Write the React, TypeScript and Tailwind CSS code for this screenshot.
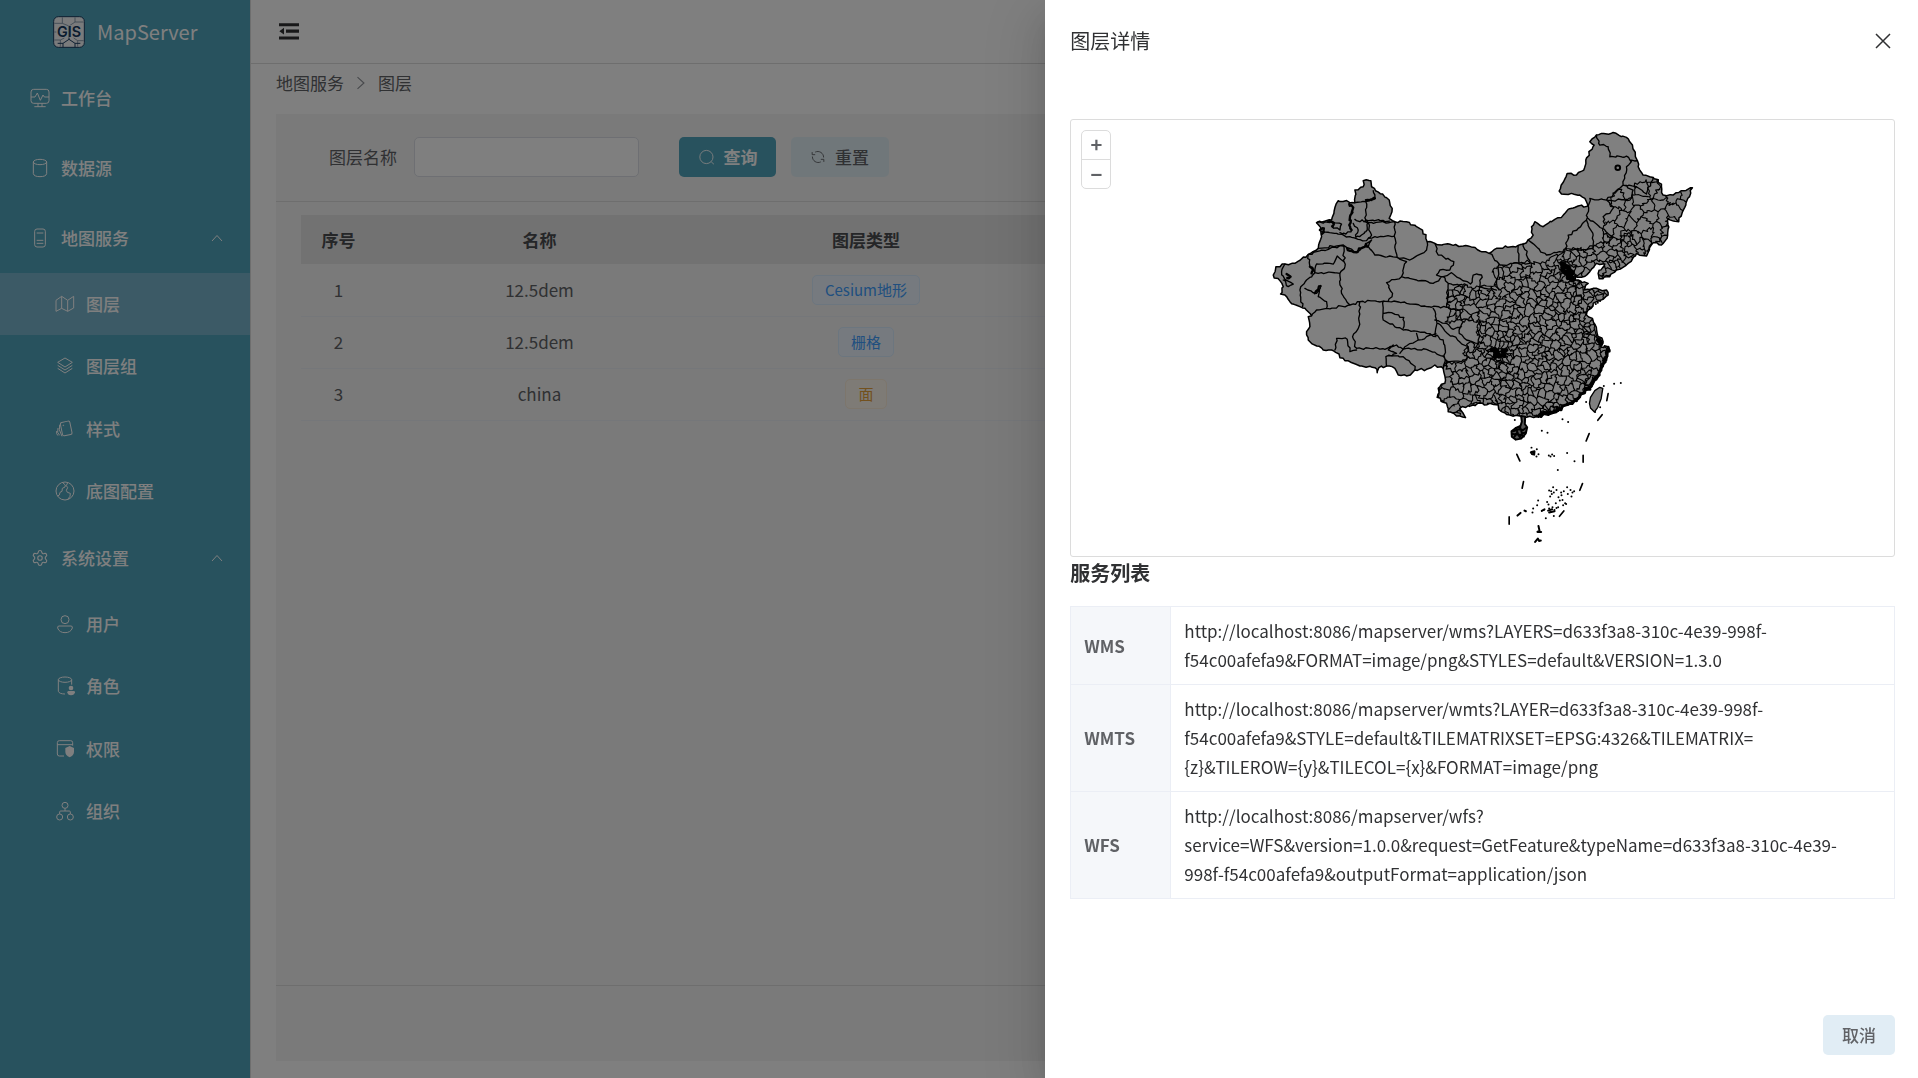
import React from "react";
import { Settings } from "lucide-react";

type Point = [number, number];

/* ---------- map geometry ---------- */

const parse = (text: string): Point[] =>
  text
    .trim()
    .split(/\s+/)
    .map((pair) => pair.split(",").map(Number) as Point);

function noise(x: number, y: number) {
  const s = Math.sin(x * 12.9898 + y * 78.233) * 43758.5453;
  return s - Math.floor(s) - 0.5;
}

/* Splits an edge into short jittered pieces; both directions give the same line. */
function roughEdge(a: Point, b: Point, amp: number, step: number): Point[] {
  const flip = a[0] > b[0] || (a[0] === b[0] && a[1] > b[1]);
  const [p, q] = flip ? [b, a] : [a, b];
  const len = Math.hypot(q[0] - p[0], q[1] - p[1]);
  const n = Math.max(1, Math.round(len / step));
  const out: Point[] = [];
  for (let i = 0; i <= n; i++) {
    const t = i / n;
    const edge = i === 0 || i === n ? 0 : amp;
    const x = p[0] + (q[0] - p[0]) * t;
    const y = p[1] + (q[1] - p[1]) * t;
    const rx = Math.round(x);
    const ry = Math.round(y);
    out.push([x + noise(rx, ry) * edge, y + noise(ry + 7, rx + 3) * edge]);
  }
  return flip ? out.reverse() : out;
}

function roughPath(points: Point[], closed: boolean, amp: number, step = 9) {
  const parts: string[] = [];
  const count = closed ? points.length : points.length - 1;
  for (let i = 0; i < count; i++) {
    const seg = roughEdge(points[i], points[(i + 1) % points.length], amp, step);
    seg.forEach((p, j) => {
      if (i > 0 && j === 0) return;
      parts.push(`${parts.length ? "L" : "M"}${p[0].toFixed(1)} ${p[1].toFixed(1)}`);
    });
  }
  return parts.join("") + (closed ? "Z" : "");
}

function inside([x, y]: Point, poly: Point[]) {
  let hit = false;
  for (let i = 0, j = poly.length - 1; i < poly.length; j = i++) {
    const [xi, yi] = poly[i];
    const [xj, yj] = poly[j];
    if (yi > y !== yj > y && x < ((xj - xi) * (y - yi)) / (yj - yi) + xi) hit = !hit;
  }
  return hit;
}

const OUTLINE = parse(`310,182 333,182 335,200 347,212 368,222 388,240 397,265 388,295 405,305 440,305 470,320
488,330 502,365 525,370 580,376 625,378 660,393 688,400 710,385 775,376 800,368 820,345 815,320 825,305 850,320
885,298 905,292 925,268 955,258 985,258 980,245 960,225 935,220 905,222 898,213 922,160 950,165 972,150 978,120
1003,75 990,65 1010,45 1060,37 1100,52 1118,75 1133,122 1140,150 1150,165 1180,172 1205,192 1210,225 1240,225
1265,212 1298,203 1275,262 1257,305 1225,295 1222,355 1205,375 1180,368 1160,408 1130,400 1105,430 1070,450
1050,470 1018,476 1015,460 1035,432 1010,430 990,455 965,472 945,465 945,480 985,490 972,510 1000,505 1040,510
1045,525 1010,545 985,570 980,585 998,595 1012,640 1030,665 1022,680 1045,680 1040,720 1020,755 995,800 960,830
930,850 880,880 830,890 790,893 750,885 725,875 715,855 690,850 640,855 600,865 617,893 590,888 565,875 560,850
532,832 540,800 555,790 550,745 525,735 500,748 465,750 440,768 415,765 405,745 380,738 357,743 352,758 345,743
300,738 250,715 215,690 190,690 145,660 140,635 150,620 145,590 155,587 135,565 120,560 90,545 75,525 62,522
70,500 40,465 48,440 75,432 105,430 145,403 175,385 185,350 182,322 170,308 215,300 222,280 235,242 285,248
285,210 310,200`);

const BORDERS = [
  "285,248 318,245 345,235 340,212",
  "318,245 318,300 388,303",
  "325,308 405,305 403,348 412,412",
  "325,355 345,350 403,348",
  "170,308 215,304 245,312 240,330 215,318",
  "185,335 230,340 270,350 320,362 335,345 325,308 318,300",
  "175,385 250,375 290,395 320,370 335,360 325,380 345,405 412,412",
  "145,403 170,395 250,378",
  "412,412 450,420 500,390 502,365",
  "412,412 440,425 425,470 380,488 398,520 385,545",
  "250,375 255,440 240,460 165,458 170,432 220,432 232,408 252,425",
  "240,460 245,520 270,555",
  "75,432 65,455 75,478 100,492 85,500 70,480",
  "145,403 150,440 165,458 140,480 120,510 128,560",
  "135,505 170,520 182,500 175,530 200,545 200,565 170,570 155,587",
  "200,565 270,555 300,545 370,543",
  "300,545 297,620 278,650 290,685 330,685 375,688 410,675 430,688 475,660 470,640",
  "370,543 440,550 500,560 560,562",
  "370,543 370,600 430,630 500,640 528,650",
  "372,580 395,578 432,592 430,625",
  "425,470 470,480 520,490 550,470 565,490 560,562",
  "525,370 535,405 582,425 570,450 540,450 530,465 550,470",
  "520,565 530,600 525,645",
  "225,690 230,655 262,658 270,695 290,690",
  "380,738 378,710 410,700 385,690 400,675",
  "420,700 440,685 500,688 555,715 550,745",
  "378,710 430,710 460,735 465,750",
  "525,645 550,660 560,740",
  "475,660 500,650 528,640",
  "525,600 560,610 580,628 605,620",
  "535,610 562,640 625,680 620,720 560,730",
  "660,600 655,670 620,660 598,640 610,605",
  "560,562 600,570 605,600 640,600",
  "565,490 610,500 600,525 560,535",
  "688,400 718,432 710,490 718,510",
  "550,470 575,458 600,475 632,492 640,465 665,465 660,500 710,510",
  "775,376 778,430 720,435",
  "790,370 810,430 778,430",
  "805,360 860,405 890,398 915,395 925,345 955,325 980,300 985,258",
  "980,300 1000,345 1000,385 930,390",
  "985,295 1010,312 1060,352 1040,370",
  "985,258 990,235 1040,240 1090,195 1100,140 1115,120 1133,122",
  "1010,45 1020,75 1045,80 1050,110 1100,108 1115,125",
  "1090,195 1120,210 1110,240 1040,240 1062,262 1050,280 1030,290 1035,312",
  "1090,195 1130,200 1160,222 1180,172",
];

const CHAINS = [
  "268,252 280,262 272,285 268,315 275,330",
  "262,385 290,397 318,372 322,380",
  "180,330 192,325 186,342",
  "150,440 160,450 155,460",
  "165,520 175,508 182,498",
  "80,462 92,470 82,474",
  "205,305 222,312 218,320",
  "318,240 345,235 335,240",
];

const THIN_CHAINS = ["285,298 300,305 318,300 322,330 305,345 288,352 295,330 280,310", "275,330 258,342 240,338"];

const DENSE = parse(`560,600 570,500 700,500 720,440 800,430 860,408 925,393 1000,387 1035,350 1035,310 1062,262
1045,240 1110,240 1120,205 1180,172 1320,190 1320,920 500,920 520,800 552,735 622,722 628,680 658,668 662,600 605,600`);

/* Metropolitan centres with many small districts: x, y, radius. */
const HUBS = [
  [715, 700, 42],
  [920, 445, 24],
  [938, 468, 20],
  [1020, 668, 16],
  [1038, 700, 18],
  [865, 868, 18],
  [945, 520, 20],
  [980, 635, 26],
  [1100, 355, 16],
  [845, 690, 22],
  [980, 800, 18],
  [1000, 780, 16],
  [770, 670, 24],
  [660, 690, 14],
  [790, 880, 14],
  [1058, 260, 8],
  [1055, 425, 14],
  [880, 550, 16],
  [545, 460, 10],
  [620, 545, 12],
];

function spacing(x: number, y: number) {
  for (const [hx, hy, r] of HUBS) if (Math.hypot(x - hx, y - hy) < r) return 9;
  if (y < 340 && x > 1000) return 36;
  if (x > 1000 && y < 470) return 21;
  if (x < 640) return 22;
  return 17;
}

function buildCells() {
  let seed = 20240;
  const rand = () => {
    seed = (seed * 1664525 + 1013904223) % 4294967296;
    return seed / 4294967296;
  };
  const sites: { p: Point; r: number }[] = [];
  for (let i = 0; i < 9000; i++) {
    const x = 480 + rand() * 860;
    const y = 140 + rand() * 790;
    const r = spacing(x, y) * (0.65 + rand() * 0.9);
    if (sites.every((s) => Math.hypot(s.p[0] - x, s.p[1] - y) > Math.min(r, (s.r + r) / 2))) {
      sites.push({ p: [x, y], r });
    }
  }
  return sites
    .filter((s) => inside(s.p, DENSE))
    .map(({ p }) => {
      const R = 80;
      let cell: Point[] = [
        [p[0] - R, p[1] - R],
        [p[0] + R, p[1] - R],
        [p[0] + R, p[1] + R],
        [p[0] - R, p[1] + R],
      ];
      for (const { p: o } of sites) {
        const dx = o[0] - p[0];
        const dy = o[1] - p[1];
        if ((dx === 0 && dy === 0) || Math.hypot(dx, dy) > 160) continue;
        const mx = p[0] + dx / 2;
        const my = p[1] + dy / 2;
        const side = (q: Point) => (q[0] - mx) * dx + (q[1] - my) * dy;
        const next: Point[] = [];
        for (let i = 0; i < cell.length; i++) {
          const a = cell[i];
          const b = cell[(i + 1) % cell.length];
          const sa = side(a);
          const sb = side(b);
          if (sa <= 0) next.push(a);
          if (sa < 0 !== sb < 0) {
            const t = sa / (sa - sb);
            next.push([a[0] + (b[0] - a[0]) * t, a[1] + (b[1] - a[1]) * t]);
          }
        }
        cell = next;
      }
      const bent = cell.map(([x, y]) => {
        const wx = Math.sin(y / 7) * 4 + Math.sin(x / 5 + y / 11) * 4;
        const wy = Math.cos(x / 6) * 4 + Math.cos(y / 5 - x / 13) * 4;
        return [Math.round(x + wx), Math.round(y + wy)] as Point;
      });
      return roughPath(bent, true, 11, 6);
    })
    .join("");
}

const OUTLINE_PATH = roughPath(OUTLINE, true, 7);
const BORDER_PATH = BORDERS.map((b) => roughPath(parse(b), false, 7)).join("");
const CHAIN_PATH = CHAINS.map((b) => roughPath(parse(b), false, 8, 6)).join("");
const THIN_CHAIN_PATH = THIN_CHAINS.map((b) => roughPath(parse(b), false, 8, 6)).join("");
const CELL_PATH = buildCells();

const ISLETS = parse(`285,450 428,448 445,456 366,482 383,488 414,600 464,574 442,549 499,396 526,426 541,412 552,348
583,341 603,339 387,557 397,554 403,558 392,560 335,533 333,548 351,538 356,553 350,560 400,652 394,664 402,668
391,680 410,660 416,682 424,668 428,690 436,700 444,672 452,660 458,668 463,664 455,680 442,652 420,692 408,700
398,712 386,704 382,696 392,726 404,720 410,714 402,738 378,745 355,692 352,706 340,716 338,728 372,720 388,716
415,712 430,706 439,702 396,672 388,662 425,676 432,664 541,93 534,98 528,102`);

function ChinaMap() {
  return (
    <svg viewBox="-567 0 2469 1308" className="block h-full w-full" role="img" aria-label="china">
      <defs>
        <clipPath id="land">
          <path d={OUTLINE_PATH} />
        </clipPath>
      </defs>
      <path d={OUTLINE_PATH} fill="#808080" />
      <g fill="none" stroke="#000" strokeLinejoin="round" strokeLinecap="round">
        <g clipPath="url(#land)">
          <path d={CELL_PATH} strokeWidth="3.4" />
        </g>
        <path d={BORDER_PATH} strokeWidth="4" />
        <path d={THIN_CHAIN_PATH} strokeWidth="4" />
        <path d={CHAIN_PATH} strokeWidth="7" />
        <path d={OUTLINE_PATH} strokeWidth="4.500" />
        <path d={roughPath(parse("1045,682 1038,720 1018,758 995,798 960,830 930,850 880,876 830,888"), false, 12, 6)} strokeWidth="9" />
        <path d={roughPath(parse("905,430 925,440 910,452 938,458 925,468 942,478"), false, 14, 5)} strokeWidth="14" />
        <path d={roughPath(parse("695,690 715,700 705,712 725,705 740,690"), false, 14, 5)} strokeWidth="12" />
        <path d={roughPath(parse("1015,660 1024,670"), false, 8, 5)} strokeWidth="14" />
        <circle cx="1074" cy="143" r="7" strokeWidth="6" />
      </g>
      <g transform="translate(480 450)" stroke="#000" strokeLinecap="round" strokeLinejoin="round">
        <path d="M512 382 525 362 540 352 549 355 544 386 534 412 524 426 512 414 509 400Z" fill="#808080" strokeWidth="4" />
        <path d="M304 438 316 440 315 462 322 472 318 490 304 506 288 509 276 500 275 484 288 474 302 468 306 455Z" fill="#555" strokeWidth="6" />
        <path
          d="M280 484 296 478 310 480 318 474M284 500 292 488 300 502 308 490 316 488M288 474 294 490M276 492 306 494 312 500M300 470 306 488"
          fill="none"
          strokeWidth="6"
        />
        <path
          d="M565 371 561 392M547 434 534 451M508 491 499 513M490 556V577M291 553 300 573M311 635 307 655M488 641 480 661M268 741V763M432 723 419 739"
          fill="none"
          strokeWidth="5"
        />
        <path
          d="M335 546 344 544 343 554 336 552ZM293 737 302 729M314 722 318 724M366 723 374 718M356 768 359 782 353 786 364 786M346 816 354 806 358 813 363 812M385 722 397 718M388 728 404 724"
          fill="none"
          strokeWidth="6"
        />
        {ISLETS.map(([x, y]) => (
          <circle key={`${x}-${y}`} cx={x} cy={y} r="3" stroke="none" />
        ))}
      </g>
    </svg>
  );
}

/* ---------- icons ---------- */

function Line({ children, size = "size-5", width = 3 }: { children: React.ReactNode; size?: string; width?: number }) {
  return (
    <svg
      viewBox="0 0 60 60"
      className={`${size} shrink-0`}
      fill="none"
      stroke="currentColor"
      strokeWidth={width}
      strokeLinejoin="round"
      aria-hidden="true"
    >
      {children}
    </svg>
  );
}

const icons = {
  monitor: (
    <Line>
      <rect x="3" y="4" width="54" height="42" rx="8" />
      <path d="M3 27H15L22 15 31 37 39 21 43 27H57M24 46V56M36 46V56M13 56H47" />
    </Line>
  ),
  database: (
    <Line>
      <ellipse cx="30" cy="12" rx="20" ry="8" />
      <path d="M10 12V47Q12 56 30 56T50 47V12" />
    </Line>
  ),
  server: (
    <Line>
      <rect x="14" y="3" width="32" height="54" rx="7" />
      <path d="M20 15H40M20 37H40M20 46H40" />
    </Line>
  ),
  map: (
    <Line>
      <path d="M3 19 20 7 38 19 56 7V42L38 52 20 43 3 52ZM20 7V43M38 19V52" />
    </Line>
  ),
  layers: (
    <Line>
      <path d="M30 6 52 19 30 33 8 19ZM8 28 30 42 52 28M8 37 30 51 52 37" />
    </Line>
  ),
  cards: (
    <Line>
      <rect x="19" y="8" width="29" height="41" rx="5" transform="rotate(-12 33 28)" />
      <path d="M14 17 13 32 21 52M9 27 8 40 14 49M5 36V44L9 50" />
      <circle cx="25" cy="19" r="1" />
    </Line>
  ),
  globe: (
    <Line>
      <circle cx="30" cy="30" r="27" />
      <path d="M22 4 31 12 30 18 22 22 21 31 15 34 13 42 8 45M38 5 34 14 38 20 34 28 37 34 46 37 45 46 39 54" />
    </Line>
  ),
  user: (
    <Line>
      <circle cx="30" cy="17" r="12" />
      <path d="M12 36H48Q53 36 52 42C49 52 40 56 30 56S11 52 8 42Q7 36 12 36Z" />
    </Line>
  ),
  role: (
    <Line>
      <ellipse cx="30" cy="11" rx="20" ry="8" />
      <path d="M10 11V46Q13 54 30 54M50 11V26" />
      <circle cx="48" cy="36" r="7" fill="currentColor" stroke="none" />
      <path d="M37 49Q37 45 41 45H56Q60 45 60 49 58 58 48 58T37 49Z" fill="currentColor" stroke="none" />
    </Line>
  ),
  permission: (
    <Line>
      <path d="M27 51H13Q7 51 7 45V11Q7 5 13 5H47Q53 5 53 11V20M7 17H53" />
      <path d="M44 21 57 27V38Q57 49 44 55 31 49 31 38V27Z" fill="currentColor" stroke="none" />
    </Line>
  ),
  org: (
    <Line>
      <circle cx="30" cy="13" r="9" />
      <circle cx="14" cy="48" r="9" />
      <circle cx="46" cy="48" r="9" />
      <path d="M30 22V30M14 39V33Q14 30 17 30H43Q46 30 46 33V39" />
    </Line>
  ),
  settings: <Settings className="size-[18px]" strokeWidth={1.5} aria-hidden="true" />,
};

type IconName = keyof typeof icons;

function Chevron({ className }: { className: string }) {
  return (
    <svg viewBox="0 0 12 12" className={className} fill="none" stroke="currentColor" aria-hidden="true">
      <path d="M1 9 6 3.500 11 9" />
    </svg>
  );
}

function Logo() {
  return (
    <svg viewBox="0 0 96 96" className="size-8" role="img" aria-label="GIS">
      <rect x="2" y="2" width="92" height="92" rx="14" fill="#f4f6f8" stroke="#1c3f63" strokeWidth="3" />
      <g fill="none" stroke="#5b7690" strokeWidth="2">
        <path d="M4 22H28V4M28 22 48 30 66 18V4M66 18H92M4 72H22V92M22 72 34 66M62 66 74 74V92M74 74H92M4 48H10" />
      </g>
      <path d="M48 30V70L30 82V94M48 70 66 82V94M30 82H14M66 82H82" fill="none" stroke="#1c3f63" strokeWidth="3" />
      <text
        x="48"
        y="62"
        textAnchor="middle"
        fontFamily="Inter, 'Liberation Sans', sans-serif"
        fontWeight="600"
        fontSize="43"
        fill="#15385c"
        stroke="#f4f6f8"
        strokeWidth="3"
        paintOrder="stroke"
      >
        GIS
      </text>
    </svg>
  );
}

/* ---------- sidebar ---------- */

function TopItem({ icon, label, open }: { icon: IconName; label: string; open?: boolean }) {
  const body = (
    <>
      <span className="flex w-[30px] justify-center">{icons[icon]}</span>
      <span className="ml-1.5">{label}</span>
      {open && <Chevron className="ml-auto size-3" />}
    </>
  );
  const style = "flex h-[70px] w-full items-center pr-[27px] pl-[25px]";
  return open ? (
    <button type="button" aria-expanded="true" className={style}>
      {body}
    </button>
  ) : (
    <a href="#" className={style}>
      {body}
    </a>
  );
}

function SubMenu({ items, active }: { items: [IconName, string][]; active?: string }) {
  return (
    <ul className="mb-px grid h-[249px] grid-rows-4">
      {items.map(([icon, label]) => (
        <li key={label} className="flex">
          <a
            href="#"
            className={`flex flex-1 items-center pl-[50px] ${label === active ? "bg-[#78b4cc]" : ""}`}
            aria-current={label === active ? "page" : undefined}
          >
            <span className="flex w-[30px] justify-center">{icons[icon]}</span>
            <span className="ml-1.5">{label}</span>
          </a>
        </li>
      ))}
    </ul>
  );
}

function Sidebar() {
  return (
    <aside className="w-[250px] shrink-0 bg-[#50a4bc] font-medium text-white">
      <div className="flex h-[63px] items-center gap-3 pl-[53px]">
        <Logo />
        <span className="text-xl font-normal">MapServer</span>
      </div>
      <nav>
        <TopItem icon="monitor" label="工作台" />
        <TopItem icon="database" label="数据源" />
        <TopItem icon="server" label="地图服务" open />
        <SubMenu
          active="图层"
          items={[
            ["map", "图层"],
            ["layers", "图层组"],
            ["cards", "样式"],
            ["globe", "底图配置"],
          ]}
        />
        <TopItem icon="settings" label="系统设置" open />
        <SubMenu
          items={[
            ["user", "用户"],
            ["role", "角色"],
            ["permission", "权限"],
            ["org", "组织"],
          ]}
        />
      </nav>
    </aside>
  );
}

/* ---------- main page ---------- */

const rows = [
  { id: 1, name: "12.5dem", type: "Cesium地形", tone: "border-[#d9ecff] bg-[#ecf5ff] text-[#409eff]" },
  { id: 2, name: "12.5dem", type: "栅格", tone: "border-[#d9ecff] bg-[#ecf5ff] text-[#409eff]" },
  { id: 3, name: "china", type: "面", tone: "border-[#faecd8] bg-[#fdf6ec] text-[#e6a23c]" },
];

function LayerPage() {
  return (
    <div className="flex min-w-0 flex-1 flex-col border-l border-[#dcdcdc]">
      <header className="flex h-16 shrink-0 items-center border-b border-[#dcdcdc] pl-7">
        <button type="button" aria-label="折叠菜单">
          <svg viewBox="0 0 60 50" className="h-[17px] w-5" fill="#303133" aria-hidden="true">
            <path d="M0 0H60V9H0ZM21 19H60V29H21ZM0 40H60V49H0ZM1 24 15 14V34Z" />
          </svg>
        </button>
      </header>
      <nav aria-label="breadcrumb" className="flex h-[50px] items-start pt-1.5 pl-[25px] text-[#606266]">
        <a href="#">地图服务</a>
        <Chevron className="mx-2.5 mt-1.5 size-3.5 rotate-90 text-[#909399]" />
        <span>图层</span>
      </nav>
      <main className="mr-[25px] mb-[17px] ml-[25px] flex flex-1 flex-col bg-[#f4f4f4]">
        <form className="flex h-[88px] items-center border-b border-[#dcdcdc] pb-px pl-[53px]">
          <label htmlFor="layer-name" className="text-[#606266]">
            图层名称
          </label>
          <input
            id="layer-name"
            className="ml-[17px] h-10 w-[225px] rounded-[5px] border border-[#dcdfe6] bg-white px-3 outline-none"
          />
          <button
            type="button"
            className="ml-10 flex h-10 w-[97px] items-center justify-center gap-2 rounded-[5px] bg-[#50a4bc] font-bold text-white"
          >
            <Line size="size-[18px]">
              <circle cx="28" cy="30" r="22" />
              <path d="M44 46 53 54" />
            </Line>
            查询
          </button>
          <button
            type="button"
            className="ml-[15px] flex h-10 w-[98px] items-center justify-center gap-2.5 rounded-[5px] bg-[#e1eff5] font-medium text-[#606266]"
          >
            <Line size="size-3.5" width={4}>
              <path d="M18 9A25 25 0 0 1 54 32M42 51A25 25 0 0 1 6 28M5 9V20L18 20M55 51V40L42 40" />
            </Line>
            重置
          </button>
        </form>
        <div className="flex-1 px-[25px] pt-[13px]">
          <table className="w-full table-fixed text-center text-[#606266]">
            <colgroup>
              <col className="w-[75px]" />
              <col className="w-[327px]" />
              <col className="w-[326px]" />
              <col />
            </colgroup>
            <thead>
              <tr className="h-[49px] bg-[#e4e4e4] font-bold text-[#4b4d50]">
                <th>序号</th>
                <th>名称</th>
                <th>图层类型</th>
                <td />
              </tr>
            </thead>
            <tbody>
              {rows.map((row) => (
                <tr key={row.id} className="h-[52px] border-b border-[#ebeef5]">
                  <td>{row.id}</td>
                  <td>{row.name}</td>
                  <td>
                    <span className={`inline-flex h-[30px] items-center rounded-[5px] border px-3 text-[15px] ${row.tone}`}>
                      {row.type}
                    </span>
                  </td>
                  <td />
                </tr>
              ))}
            </tbody>
          </table>
        </div>
        <footer className="h-[76px] border-t border-[#dcdcdc]" />
      </main>
    </div>
  );
}

/* ---------- drawer ---------- */

const services: { name: string; lines: string[] }[] = [
  {
    name: "WMS",
    lines: [
      "http://localhost:8086/mapserver/wms?LAYERS=d633f3a8-310c-4e39-998f-",
      "f54c00afefa9&FORMAT=image/png&STYLES=default&VERSION=1.3.0",
    ],
  },
  {
    name: "WMTS",
    lines: [
      "http://localhost:8086/mapserver/wmts?LAYER=d633f3a8-310c-4e39-998f-",
      "f54c00afefa9&STYLE=default&TILEMATRIXSET=EPSG:4326&TILEMATRIX=",
      "{z}&TILEROW={y}&TILECOL={x}&FORMAT=image/png",
    ],
  },
  {
    name: "WFS",
    lines: [
      "http://localhost:8086/mapserver/wfs?",
      "service=WFS&version=1.0.0&request=GetFeature&typeName=d633f3a8-310c-4e39-",
      "998f-f54c00afefa9&outputFormat=application/json",
    ],
  },
];

function Drawer() {
  return (
    <section
      role="dialog"
      aria-label="图层详情"
      className="fixed inset-y-0 right-0 flex w-[45.5%] flex-col bg-white shadow-[0_20px_60px_20px_rgba(0,0,0,0.08),0_15px_40px_rgba(0,0,0,0.12),0_10px_20px_-10px_rgba(0,0,0,0.16)]"
    >
      <header className="mb-[38px] flex items-center justify-between pt-[26px] pr-[23px] pl-[25px]">
        <h2 className="text-xl leading-[30px] text-[#303133]">图层详情</h2>
        <button type="button" aria-label="关闭" className="mr-1">
          <svg viewBox="0 0 16 16" className="size-4" fill="none" stroke="#303133" strokeWidth="1.500" aria-hidden="true">
            <path d="M1 1 15 15M15 1 1 15" />
          </svg>
        </button>
      </header>
      <div className="flex-1 pt-[25px] pr-[23px] pl-[25px]">
        <div className="relative h-[438px] rounded-[3px] border border-[#dcdcdc]">
          <ChinaMap />
          <div className="absolute top-2.5 left-2.5 flex w-[30px] flex-col rounded-[5px] border border-[#dcdcdc] bg-white text-xl leading-[26px] font-bold text-[#606266]">
            <button type="button" aria-label="放大" className="flex h-[29px] justify-center border-b border-[#dcdcdc]">
              +
            </button>
            <button type="button" aria-label="缩小" className="flex h-[28px] items-center justify-center">
              −
            </button>
          </div>
        </div>
        <h3 className="mb-[17px] text-xl leading-8 font-bold text-[#303133]">服务列表</h3>
        <table className="w-full border-collapse">
          <tbody>
            {services.map((service) => (
              <tr key={service.name}>
                <th
                  scope="row"
                  className="w-[100px] border border-[#ebeef5] bg-[#f5f7fa] px-[13px] text-left font-bold text-[#606266]"
                >
                  {service.name}
                </th>
                <td className="border border-[#ebeef5] px-[13px] pt-[9px] pb-2.5 leading-[29px] text-[#303133]">
                  {service.lines.map((line) => (
                    <span key={line} className="block">
                      {line}
                    </span>
                  ))}
                </td>
              </tr>
            ))}
          </tbody>
        </table>
      </div>
      <footer className="flex justify-end pr-[23px] pb-[23px]">
        <button type="button" className="h-10 w-[72px] rounded-[5px] bg-[#e1edf5] font-medium text-[#606266]">
          取消
        </button>
      </footer>
    </section>
  );
}

export default function App() {
  return (
    <div className="flex min-h-screen bg-white font-['Noto_Sans_CJK_SC',sans-serif] text-[17px] leading-[26px]">
      <Sidebar />
      <LayerPage />
      <div className="fixed inset-0 bg-black/50" />
      <Drawer />
    </div>
  );
}
